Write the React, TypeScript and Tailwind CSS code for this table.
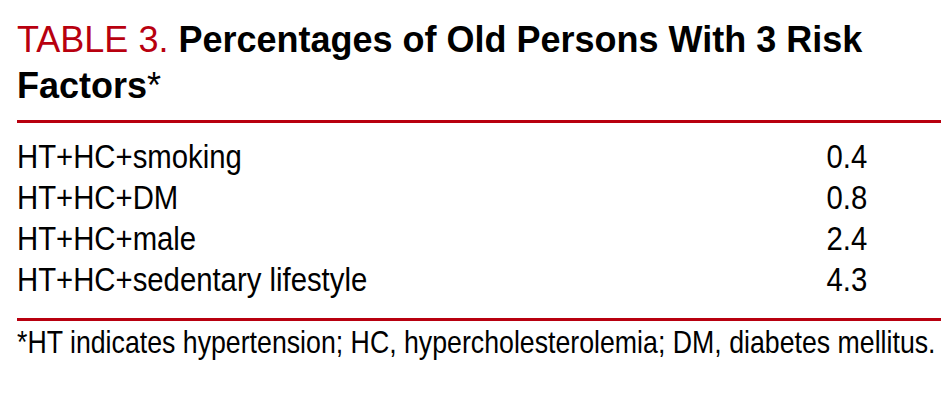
import React from "react";

const rows = [
  ["HT+HC+smoking", "0.4"],
  ["HT+HC+DM", "0.8"],
  ["HT+HC+male", "2.4"],
  ["HT+HC+sedentary lifestyle", "4.3"],
];

const body = { fontFamily: '"Liberation Sans", Arial, sans-serif' };

export default function App() {
  return (
    <div className="w-[952px] h-[400px] overflow-hidden bg-white pl-[17px] pr-[11px] pt-[17px]">
      <div className="text-[36px] leading-[46px] text-black" style={body}>
        <span className="text-[#b8000f]">TABLE 3. </span>
        <span className="font-bold">Percentages of Old Persons With 3 Risk Factors</span>
        <span>*</span>
      </div>
      <div className="mt-[11px] h-[3px] bg-[#b8000f]" />
      <div className="pt-[13px] pb-[18px] text-black" style={body}>
        {rows.map(([label, value]) => (
          <div key={label} className="flex text-[34px] leading-[41px]">
            <div className="flex-1 whitespace-nowrap">
              <span className="inline-block origin-left scale-x-[0.862]">{label}</span>
            </div>
            <div className="w-[200px] pr-[74px] text-right">
              <span className="inline-block origin-right scale-x-[0.862]">{value}</span>
            </div>
          </div>
        ))}
      </div>
      <div className="h-[3px] bg-[#b8000f]" />
      <div className="pt-[1px] text-[31.5px] leading-[40px] text-black whitespace-nowrap" style={body}>
        <span className="inline-block origin-left scale-x-[0.848]">
          *HT indicates hypertension; HC, hypercholesterolemia; DM, diabetes mellitus.
        </span>
      </div>
    </div>
  );
}
